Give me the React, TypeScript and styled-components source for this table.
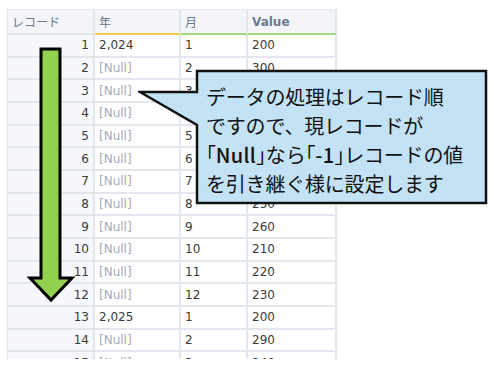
import * as React from 'react'
import styled, { createGlobalStyle } from 'styled-components'

const GlobalStyle = createGlobalStyle`
  html, body {
    margin: 0;
    padding: 0;
    background: #ffffff;
  }
`

const Page = styled.div`
  position: relative;
  width: 494px;
  height: 371px;
  padding: 9px 0 0 7px;
  box-sizing: border-box;
  overflow: hidden;
  font-family: "DejaVu Sans", Verdana, sans-serif;
`

const Grid = styled.div`
  width: 330px;
  height: 350px;
  overflow: hidden;
  border-left: 1px solid #e2e7ef;
  border-top: 1px solid #e2e7ef;
  box-sizing: border-box;
`

const Row = styled.div<{ $header?: boolean }>`
  display: grid;
  grid-template-columns: 87px 86px 67px 89px;
  height: ${p => (p.$header ? '25px' : '22.67px')};
  background: ${p => (p.$header ? '#f3f5f9' : '#ffffff')};
`

const HeadCell = styled.div<{ $line?: string; $bold?: boolean }>`
  display: flex;
  align-items: center;
  padding: 0 0 0 4px;
  box-sizing: border-box;
  border-right: 2px solid #e2e7ef;
  border-bottom: 2px solid ${p => p.$line || '#e2e7ef'};
  font-size: 12px;
  font-weight: ${p => (p.$bold ? 700 : 400)};
  color: #6a7890;
  font-family: ${p => (p.$bold ? '"DejaVu Sans", Verdana, sans-serif' : '"Noto Sans CJK JP", sans-serif')};
`

const Cell = styled.div<{ $index?: boolean; $null?: boolean }>`
  display: flex;
  align-items: center;
  justify-content: ${p => (p.$index ? 'flex-end' : 'flex-start')};
  padding: ${p => (p.$index ? '0 4px 0 0' : '0 0 0 4px')};
  box-sizing: border-box;
  border-right: 2px solid #e2e7ef;
  border-bottom: 2px solid #e2e7ef;
  background: ${p => (p.$index ? '#f6f8fb' : 'transparent')};
  font-size: 12px;
  color: ${p => (p.$null ? '#a3abba' : '#3a3a3a')};
`

const ArrowSvg = styled.svg`
  position: absolute;
  left: 26px;
  top: 45px;
`

const Callout = styled.div`
  position: absolute;
  left: 138px;
  top: 69px;
  width: 352px;
  height: 137px;
`

const CalloutShape = styled.svg`
  position: absolute;
  left: 0;
  top: 0;
`

const CalloutText = styled.div`
  position: absolute;
  left: 68px;
  top: 13px;
  font-family: "Noto Sans CJK JP", sans-serif;
  font-size: 20px;
  line-height: 29px;
  color: #111111;
  white-space: nowrap;
  letter-spacing: -0.2px;
`

const Bracket = styled.span`
  font-feature-settings: "halt";
`

const Strong = styled.span`
  font-weight: 500;
  letter-spacing: 0.3px;
`

interface Rec {
  year: string | null
  month: string
  value: string
}

const data: Rec[] = [
  { year: '2,024', month: '1', value: '200' },
  { year: null, month: '2', value: '300' },
  { year: null, month: '3', value: '280' },
  { year: null, month: '4', value: '240' },
  { year: null, month: '5', value: '260' },
  { year: null, month: '6', value: '270' },
  { year: null, month: '7', value: '220' },
  { year: null, month: '8', value: '250' },
  { year: null, month: '9', value: '260' },
  { year: null, month: '10', value: '210' },
  { year: null, month: '11', value: '220' },
  { year: null, month: '12', value: '230' },
  { year: '2,025', month: '1', value: '200' },
  { year: null, month: '2', value: '290' },
  { year: null, month: '3', value: '240' },
]

const Arrow = () => (
  <ArrowSvg width="52" height="262" viewBox="0 0 52 262">
    <path
      d="M15,4 H34 V233 H46 L25,255 L4,233 H15 Z"
      fill="#92d050"
      stroke="#000"
      strokeWidth="3"
      strokeLinejoin="miter"
    />
  </ArrowSvg>
)

export default function App() {
  return (
    <>
      <GlobalStyle />
      <Page>
        <Grid>
          <Row $header>
            <HeadCell>レコード</HeadCell>
            <HeadCell $line="#f3c84a">年</HeadCell>
            <HeadCell $line="#9bd97a">月</HeadCell>
            <HeadCell $line="#9bd97a" $bold>Value</HeadCell>
          </Row>
          {data.map((r, i) => (
            <Row key={i}>
              <Cell $index>{i + 1}</Cell>
              <Cell $null={!r.year}>{r.year || '[Null]'}</Cell>
              <Cell>{r.month}</Cell>
              <Cell>{r.value}</Cell>
            </Row>
          ))}
        </Grid>
        <Arrow />
        <Callout>
          <CalloutShape width="352" height="137" viewBox="0 0 352 137">
            <path
              d="M59,2 H348 V134 H59 V56 L2,23 H59 Z"
              fill="#c3e2f5"
              stroke="#111"
              strokeWidth="2.5"
            />
          </CalloutShape>
          <CalloutText>
            データの処理はレコード順<br />
            ですので、現レコードが<br />
            <Bracket>「</Bracket><Strong>Null</Strong><Bracket>」</Bracket>なら<Bracket>「</Bracket><Strong>-1</Strong><Bracket>」</Bracket>レコードの値<br />
            を引き継ぐ様に設定します
          </CalloutText>
        </Callout>
      </Page>
    </>
  )
}
